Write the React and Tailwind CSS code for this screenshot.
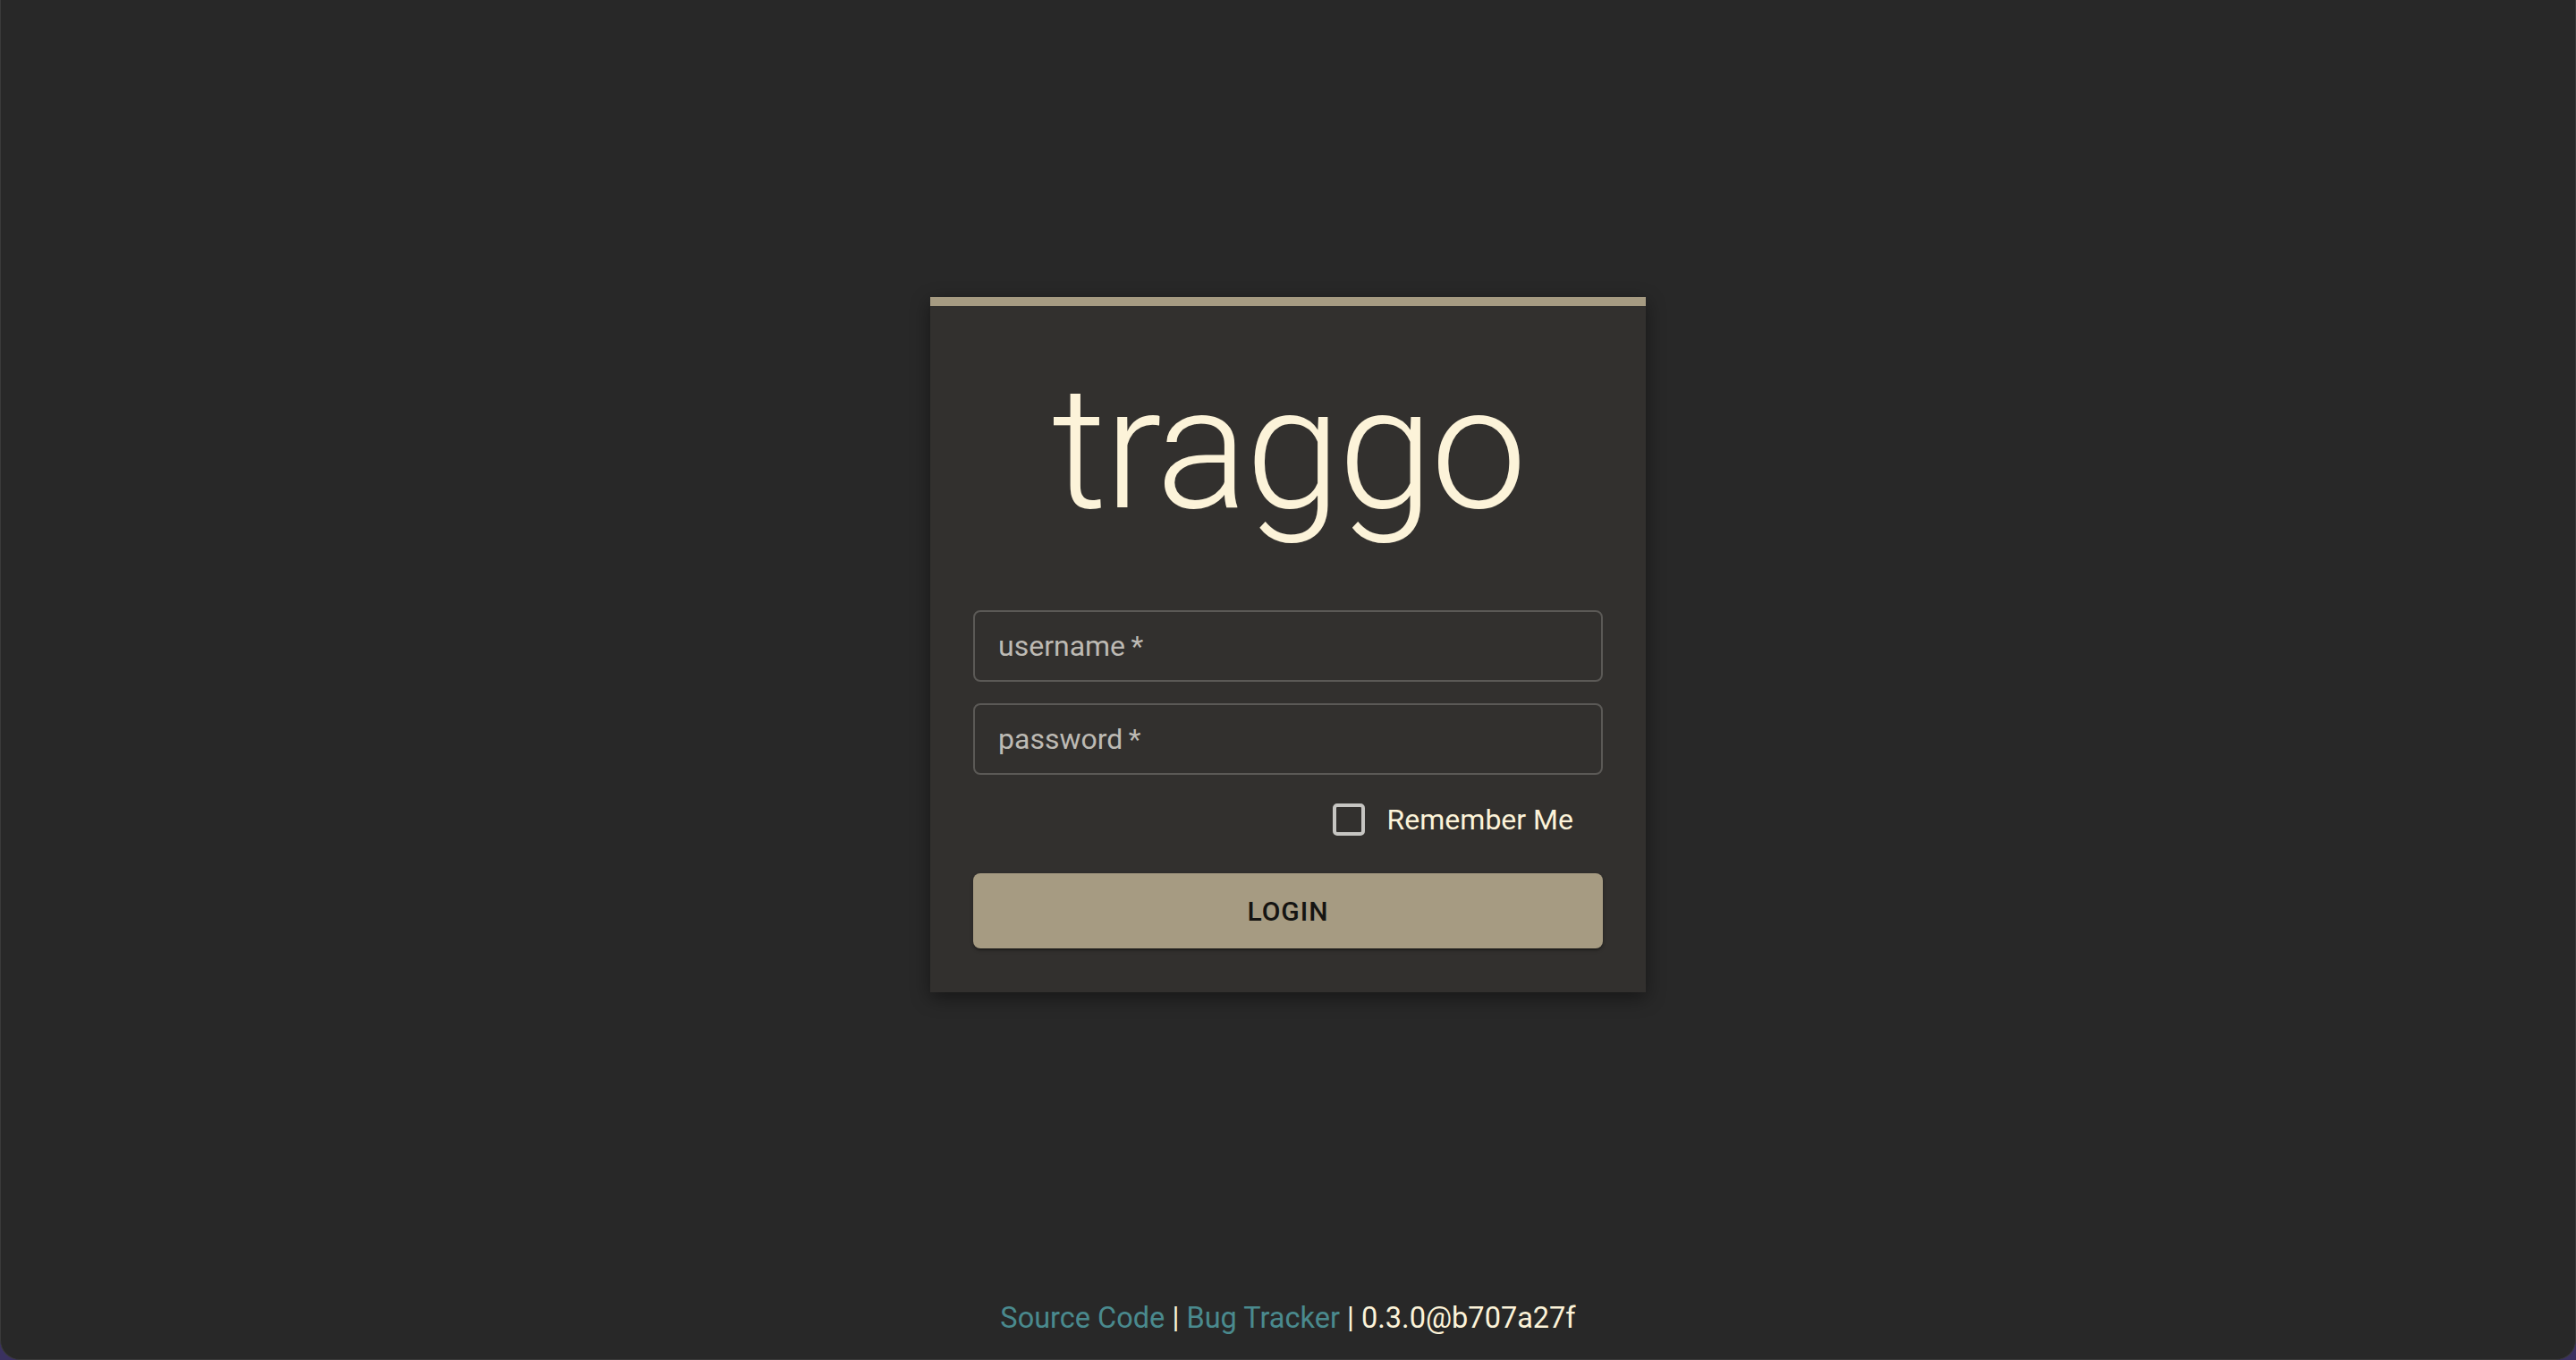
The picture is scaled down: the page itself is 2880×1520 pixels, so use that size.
import React, { useState } from "react";

const App = () => {
  const [values, setValues] = useState({ username: "", password: "", remember: false });

  return (
    <div className="w-full h-screen bg-[#3a3160]" style={{ fontFamily: "Roboto, 'Liberation Sans', sans-serif" }}>
      <div className="w-full h-full flex flex-col bg-[#282828] border-x border-b border-[#3a3a3a] rounded-b-[22px] overflow-hidden">
        {/* Login card */}
        <div className="flex-1 flex items-center justify-center">
          <div className="w-[800px] bg-[#32302e] border-t-[10px] border-[#a69b82] shadow-[0_6px_20px_rgba(0,0,0,0.45)] px-[48px] pt-[48px] pb-[49px] translate-y-[1px]">
            <h1 className="text-center text-[192px] leading-[224px] font-light tracking-[-3px] text-[#fcf3d9]">traggo</h1>

            <form className="mt-[68px] flex flex-col" onSubmit={(e) => e.preventDefault()}>
              <input
                value={values.username}
                onChange={(e) => setValues((prev) => ({ ...prev, username: e.target.value }))}
                placeholder={"username\u2009*"}
                className="h-[80px] w-full rounded-[8px] border-2 border-[#5b5956] bg-transparent px-[26px] text-[32px] text-[#fcf3d9] placeholder:text-[#bdbab4] outline-none"
              />
              <input
                type="password"
                value={values.password}
                onChange={(e) => setValues((prev) => ({ ...prev, password: e.target.value }))}
                placeholder={"password\u2009*"}
                className="mt-[24px] h-[80px] w-full rounded-[8px] border-2 border-[#5b5956] bg-transparent px-[26px] text-[32px] text-[#fcf3d9] placeholder:text-[#bdbab4] outline-none"
              />

              {/* Remember me */}
              <div className="flex justify-end pr-[33px] h-[84px] mt-[8px]">
                <label className="flex items-center gap-[25px] cursor-pointer">
                  <span
                    className="w-[36px] h-[36px] rounded-[5px] border-[4px] border-[#c6c5c2] flex items-center justify-center"
                    onClick={() => setValues((prev) => ({ ...prev, remember: !prev.remember }))}
                  >
                    {values.remember && <span className="w-[18px] h-[18px] bg-[#a69b82]" />}
                  </span>
                  <span className="text-[32px] text-[#fcf3d9]">Remember Me</span>
                </label>
              </div>

              <button
                type="submit"
                className="mt-[18px] h-[84px] w-full rounded-[8px] bg-[#a69b82] text-[30px] font-medium tracking-[1px] text-[#151412] shadow-[0_3px_2px_-2px_rgba(0,0,0,0.4),0_2px_4px_rgba(0,0,0,0.3)]"
              >
                LOGIN
              </button>
            </form>
          </div>
        </div>

        {/* Footer */}
        <div className="h-[80px] pt-[10px] text-center text-[32.5px] leading-[48px] text-[#fcf3d9]">
          <a href="#" className="text-[#4a8a8e]">Source Code</a>
          {" | "}
          <a href="#" className="text-[#4a8a8e]">Bug Tracker</a>
          {" | 0.3.0@b707a27f"}
        </div>
      </div>
    </div>
  );
};

export default App;
